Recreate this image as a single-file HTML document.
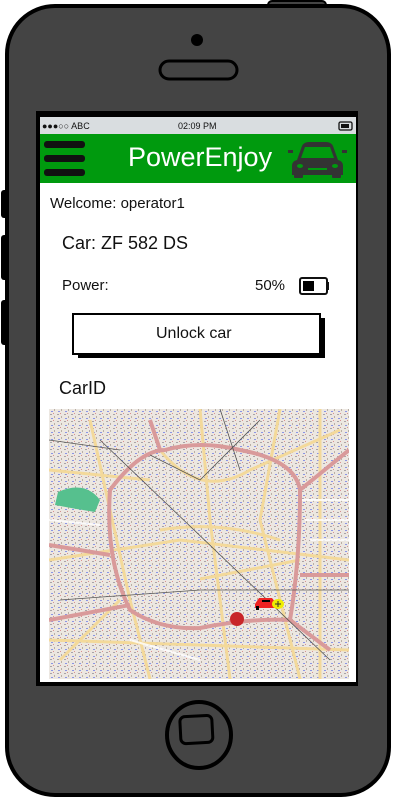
<!DOCTYPE html>
<html><head><meta charset="utf-8"><style>
body{margin:0;width:400px;height:800px;background:#fff;overflow:hidden;font-family:"Liberation Sans",sans-serif}
.t{position:absolute;color:#111;white-space:nowrap}
</style></head><body>
<svg width="400" height="800" style="position:absolute;left:0;top:0">
 <rect x="1" y="190" width="8" height="28" rx="3" fill="#000"/>
 <rect x="1" y="235" width="8" height="45" rx="3" fill="#000"/>
 <rect x="1" y="300" width="8" height="45" rx="3" fill="#000"/>
 <rect x="268" y="1" width="58" height="10" rx="4" fill="#444" stroke="#000" stroke-width="2"/>
 <rect x="7" y="6" width="382" height="789" rx="48" fill="#444" stroke="#000" stroke-width="4"/>
 <circle cx="197" cy="40" r="6" fill="#000"/>
 <rect x="160" y="61" width="77" height="18" rx="9" fill="none" stroke="#000" stroke-width="3"/>
 <rect x="36" y="111" width="322" height="575" fill="#000"/>
 <rect x="40" y="117" width="316" height="565" fill="#fff"/>
 <rect x="40" y="117" width="316" height="17" fill="#d9dde0"/>
 <rect x="40" y="134" width="316" height="49" fill="#009a0e"/>
 <rect x="44" y="141" width="41" height="7" rx="3" fill="#111"/>
 <rect x="44" y="155" width="41" height="7" rx="3" fill="#111"/>
 <rect x="44" y="169" width="41" height="7" rx="3" fill="#111"/>
 <g fill="#333">
  <path d="M297 160 L302 146 Q304 142 309 142 L326 142 Q331 142 333 146 L338 160 Q343 161 343 166 L343 175 L292 175 L292 166 Q292 161 297 160Z"/>
  <rect x="294" y="174" width="9" height="4" rx="1"/><rect x="332" y="174" width="9" height="4" rx="1"/>
  <rect x="288" y="150" width="5" height="3"/><rect x="342" y="150" width="5" height="3"/>
 </g>
 <path d="M301 158 L305 147 L330 147 L334 158Z" fill="#009a0e"/>
 <ellipse cx="300" cy="166" rx="3" ry="2" fill="#009a0e"/><ellipse cx="335" cy="166" rx="3" ry="2" fill="#009a0e"/>
 <rect x="308" y="168" width="19" height="2" fill="#009a0e"/>
 <rect x="339" y="122" width="13" height="8" rx="1.5" fill="none" stroke="#111" stroke-width="1.3"/>
 <rect x="341" y="124" width="8" height="4" fill="#111"/>
 <rect x="300" y="278" width="27" height="16" rx="2" fill="none" stroke="#111" stroke-width="2"/>
 <rect x="327" y="282" width="2" height="8" fill="#111"/>
 <rect x="303" y="281" width="11" height="10" fill="#000"/>
 <rect x="78" y="318" width="247" height="40" fill="#000"/>
 <rect x="73" y="314" width="247" height="40" fill="#fff" stroke="#000" stroke-width="2"/>
 <defs><clipPath id="m"><rect x="49" y="409" width="300" height="270"/></clipPath>
 <pattern id="n" width="7" height="7" patternUnits="userSpaceOnUse"><rect width="7" height="7" fill="#ece7e1"/><rect x="1" y="1" width="2" height="1" fill="#a9a3a6"/><rect x="5" y="3" width="1" height="2" fill="#b9afa5"/><rect x="2" y="5" width="2" height="1" fill="#8a94e6"/><rect x="4" y="0" width="1" height="1" fill="#d89090"/></pattern></defs>
 <g clip-path="url(#m)">
  <rect x="49" y="409" width="300" height="270" fill="url(#n)"/>
  <path d="M58 492 Q85 480 100 500 L95 512 Q70 508 55 505Z" fill="#56c08e"/>
  <g fill="none" stroke="#f3d99a" stroke-width="3">
   <path d="M90 420 L130 600 L150 679"/><path d="M49 560 L180 540 L349 560"/><path d="M200 409 L210 520 L230 679"/><path d="M280 409 L260 520 L300 679"/><path d="M49 640 L349 650"/><path d="M160 450 Q200 500 250 470 L340 430"/>
   <path d="M49 470 L150 480"/><path d="M160 530 Q220 520 280 540"/><path d="M320 409 L320 679"/><path d="M60 660 L120 600"/><path d="M200 579 L300 560"/>
  </g>
  <g fill="none" stroke="#fff" stroke-width="2" opacity="0.8">
   <path d="M300 500 L349 500"/><path d="M305 520 L349 520"/><path d="M310 540 L349 540"/><path d="M49 520 L100 525"/><path d="M130 640 L200 660"/>
  </g>
  <g fill="none" stroke="#d99a9a" stroke-width="4">
   <path d="M165 450 Q140 450 110 490 Q105 560 130 610 Q160 630 200 628 Q250 618 290 620 Q300 560 300 490 Q295 460 240 450 Q200 440 165 450Z"/>
   <path d="M49 545 L110 555"/><path d="M49 620 L130 605"/><path d="M300 490 L349 450"/><path d="M300 575 L349 575"/><path d="M290 620 L330 650"/><path d="M160 450 L150 420"/>
  </g>
  <g stroke="#555" stroke-width="0.8" fill="none"><path d="M150 455 L200 480 L260 420"/><path d="M60 600 L200 590 L349 590"/><path d="M100 440 L330 660"/><path d="M49 440 L120 450"/><path d="M220 409 L240 470"/></g>
  <circle cx="237" cy="619" r="7" fill="#c8262a"/>
  <path d="M255 604 L259 598 L272 598 L276 603 L276 608 L255 608Z" fill="#e22"/>
  <rect x="256" y="606" width="3" height="4" fill="#000"/><rect x="262" y="600" width="8" height="2" fill="#000"/>
  <ellipse cx="278" cy="604" rx="6" ry="5" fill="#ee0"/>
  <path d="M275 604 L281 604 M278 601 L278 607" stroke="#333" stroke-width="1"/>
 </g>
 <ellipse cx="199" cy="735" rx="32" ry="33" fill="none" stroke="#000" stroke-width="4"/>
 <rect x="181" y="729" width="32" height="27" rx="5" fill="none" stroke="#000" stroke-width="3" transform="rotate(-3 197 742) translate(0 -13)"/>
</svg>
<div class="t" style="left:42px;top:121px;font-size:9px">●●●○○ ABC</div>
<div class="t" style="left:178px;top:121px;font-size:9px">02:09 PM</div>
<div class="t" style="left:128px;top:142px;font-size:27px;color:#fff">PowerEnjoy</div>
<div class="t" style="left:50px;top:195px;font-size:15px">Welcome: operator1</div>
<div class="t" style="left:62px;top:233px;font-size:18px">Car: ZF 582 DS</div>
<div class="t" style="left:62px;top:277px;font-size:15px">Power:</div>
<div class="t" style="left:255px;top:277px;font-size:15px">50%</div>
<div class="t" style="left:156px;top:325px;font-size:16px">Unlock car</div>
<div class="t" style="left:59px;top:378px;font-size:18px">CarID</div>
</body></html>
